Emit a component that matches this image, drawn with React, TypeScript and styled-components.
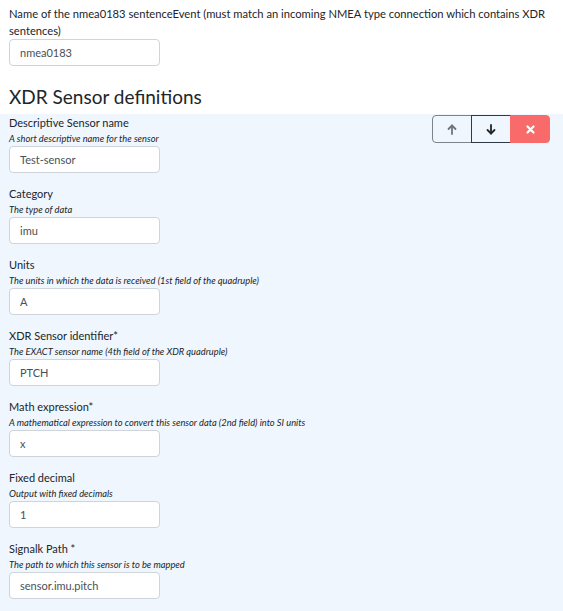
import React from "react";
import styled, { createGlobalStyle } from "styled-components";

const Global = createGlobalStyle`
  html, body { margin: 0; padding: 0; background: #ffffff; }
  body { font-family: Lato, "Open Sans", sans-serif; color: #212529; }
  * { box-sizing: border-box; }
`;

const Page = styled.div`
  width: 563px;
  min-height: 611px;
  display: flex;
  flex-direction: column;
`;

const Top = styled.div`
  padding: 5px 9px 0 9px;
  display: flex;
  flex-direction: column;
`;

const TopLabel = styled.label`
  font-size: 11.2px;
  line-height: 17px;
  color: #212529;
`;

const Input = styled.input`
  width: 151px;
  height: 27px;
  padding: 0 10px;
  border: 1px solid #ced4da;
  border-radius: 4px;
  background: #ffffff;
  font-family: inherit;
  font-size: 11px;
  color: #495057;
  outline: none;
`;

const Heading = styled.h2`
  margin: 14px 0 0 0;
  padding: 0 9px;
  height: 34px;
  font-size: 19px;
  line-height: 34px;
  font-weight: 400;
  color: #212529;
`;

const Panel = styled.div`
  flex: 1;
  background: #eff6fd;
  padding: 0 13px 0 9px;
  display: flex;
  justify-content: space-between;
  align-items: flex-start;
`;

const Fields = styled.div`
  display: flex;
  flex-direction: column;
`;

const Field = styled.div`
  display: flex;
  flex-direction: column;
  margin-bottom: 12px;
`;

const Label = styled.label`
  font-size: 11px;
  line-height: 18px;
  color: #212529;
`;

const Description = styled.span`
  font-size: 9.3px;
  line-height: 14px;
  font-style: italic;
  color: #212529;
`;

const ButtonGroup = styled.div`
  display: flex;
  margin-top: 1px;
`;

const GroupButton = styled.button<{ $variant: "up" | "down" | "danger" }>`
  width: 40px;
  height: 28px;
  display: flex;
  align-items: center;
  justify-content: center;
  padding: 0;
  cursor: pointer;
  background: ${(p) => (p.$variant === "danger" ? "#f96b6b" : "transparent")};
  border: 1px solid
    ${(p) =>
      p.$variant === "danger" ? "#f96b6b" : p.$variant === "down" ? "#2f3a44" : "#7b838b"};
  color: ${(p) => (p.$variant === "danger" ? "#ffffff" : p.$variant === "down" ? "#212529" : "#6c757d")};
  border-radius: ${(p) =>
    p.$variant === "up" ? "4px 0 0 4px" : p.$variant === "danger" ? "0 4px 4px 0" : "0"};
  margin-left: ${(p) => (p.$variant === "up" ? "0" : "-1px")};
`;

const ArrowIcon = ({ dir }: { dir: "up" | "down" }) => (
  <svg width="10" height="11" viewBox="0 0 10 11" fill="none" stroke="currentColor" strokeWidth="1.8" strokeLinecap="round" strokeLinejoin="round">
    {dir === "up" ? (
      <>
        <path d="M5 10V1.5" />
        <path d="M1.5 5L5 1.5L8.5 5" />
      </>
    ) : (
      <>
        <path d="M5 1V9.5" />
        <path d="M1.5 6L5 9.5L8.5 6" />
      </>
    )}
  </svg>
);

const CloseIcon = () => (
  <svg width="9" height="9" viewBox="0 0 9 9" fill="none" stroke="currentColor" strokeWidth="2.2" strokeLinecap="round">
    <path d="M1.5 1.5L7.5 7.5M7.5 1.5L1.5 7.5" />
  </svg>
);

const fields = [
  { label: "Descriptive Sensor name", desc: "A short descriptive name for the sensor", value: "Test-sensor" },
  { label: "Category", desc: "The type of data", value: "imu" },
  { label: "Units", desc: "The units in which the data is received (1st field of the quadruple)", value: "A" },
  { label: "XDR Sensor identifier*", desc: "The EXACT sensor name (4th field of the XDR quadruple)", value: "PTCH" },
  { label: "Math expression*", desc: "A mathematical expression to convert this sensor data (2nd field) into SI units", value: "x" },
  { label: "Fixed decimal", desc: "Output with fixed decimals", value: "1" },
  { label: "Signalk Path *", desc: "The path to which this sensor is to be mapped", value: "sensor.imu.pitch" },
];

export default function App() {
  return (
    <Page>
      <Global />
      <Top>
        <TopLabel>
          Name of the nmea0183 sentenceEvent (must match an incoming NMEA type connection which contains XDR sentences)
        </TopLabel>
        <Input defaultValue="nmea0183" />
      </Top>
      <Heading>XDR Sensor definitions</Heading>
      <Panel>
        <Fields>
          {fields.map((f) => (
            <Field key={f.label}>
              <Label>{f.label}</Label>
              <Description>{f.desc}</Description>
              <Input defaultValue={f.value} />
            </Field>
          ))}
        </Fields>
        <ButtonGroup>
          <GroupButton $variant="up"><ArrowIcon dir="up" /></GroupButton>
          <GroupButton $variant="down"><ArrowIcon dir="down" /></GroupButton>
          <GroupButton $variant="danger"><CloseIcon /></GroupButton>
        </ButtonGroup>
      </Panel>
    </Page>
  );
}
